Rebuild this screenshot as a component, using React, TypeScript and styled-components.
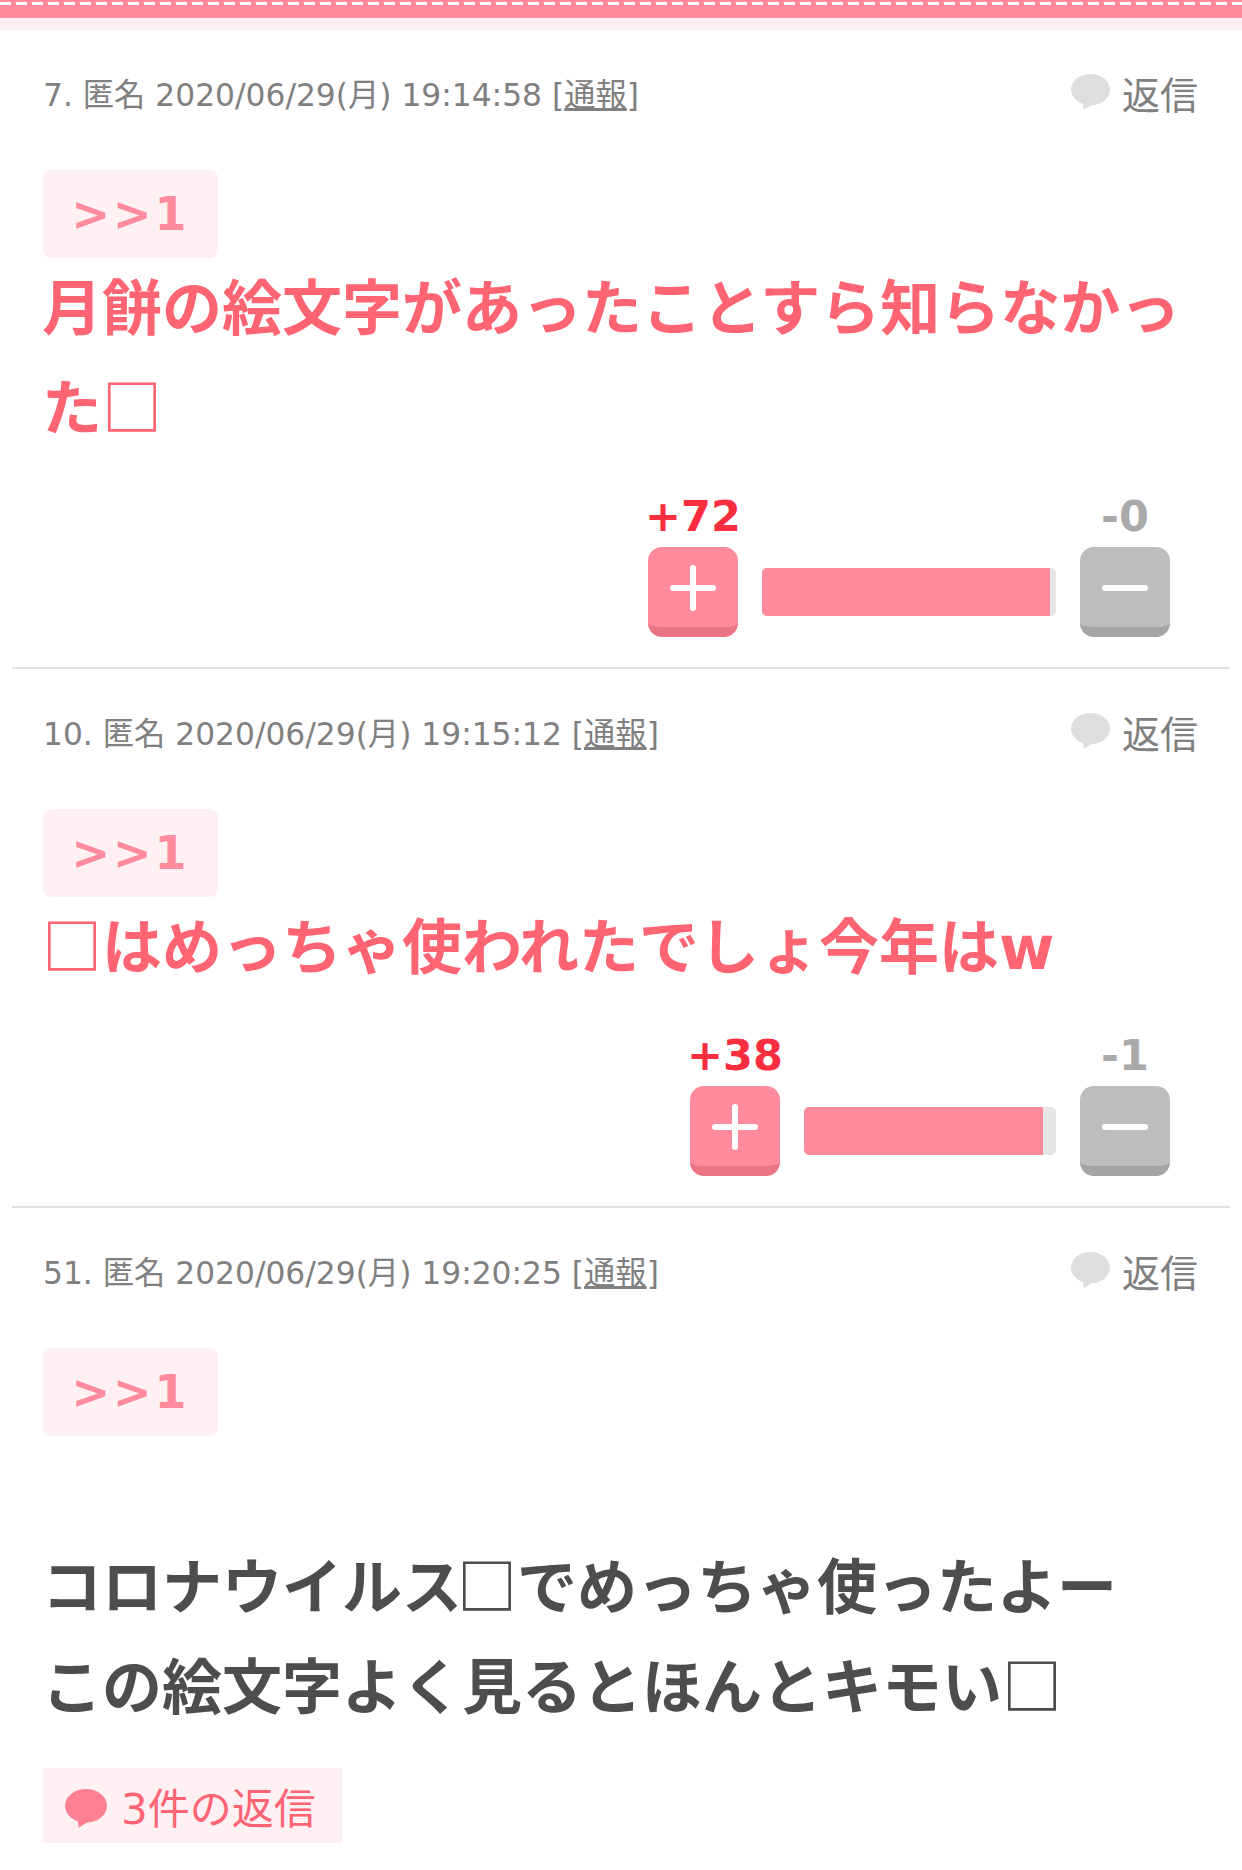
import React from 'react';
import styled, { createGlobalStyle } from 'styled-components';

const GlobalStyle = createGlobalStyle`
  html, body {
    margin: 0;
    padding: 0;
    background: #fff;
    overflow: hidden;
  }
  body {
    font-family: "DejaVu Sans", "Noto Sans CJK JP", sans-serif;
  }
`;

const Page = styled.div`
  width: 1242px;
  height: 1870px;
  overflow: hidden;
`;

const TopBand = styled.div`
  height: 16px;
  background: #ff8b9c;
  padding-top: 2px;
  border-bottom: 12px solid #fdeef1;
`;

const Stitch = styled.div`
  height: 3px;
  background: repeating-linear-gradient(to right, #fff 0 11px, transparent 11px 16px);
`;

const Post = styled.article<{ $last?: boolean }>`
  margin: 0 12px;
  padding: 0 31px;
  border-bottom: ${(p) => (p.$last ? 'none' : '2px solid #e2e2e2')};
  padding-bottom: ${(p) => (p.$last ? '0' : '30px')};
`;

const MetaRow = styled.div`
  display: flex;
  align-items: center;
  justify-content: space-between;
  height: 60px;
  padding-top: 32px;
  margin-bottom: 48px;
  margin-right: 1px;
`;

const Meta = styled.div`
  font-size: 31.3px;
  color: #808080;
  white-space: nowrap;

  a {
    color: #808080;
    text-decoration: underline;
  }
`;

const ReplyButton = styled.div`
  display: flex;
  align-items: center;
  gap: 12px;
  font-size: 38px;
  color: #808080;
`;

const Tag = styled.div`
  display: flex;
  align-items: center;
  justify-content: center;
  width: 175px;
  height: 88px;
  border-radius: 8px;
  background: #fff0f3;
  color: #ff8b9c;
  font-size: 46px;
  font-weight: 700;
  letter-spacing: 3px;
`;

const Body = styled.div<{ $reply?: boolean }>`
  font-size: 60px;
  line-height: 100px;
  font-weight: 700;
  color: ${(p) => (p.$reply ? '#ff6473' : '#4d4d4d')};
  margin-top: 1px;
  margin-left: -1px;
`;

const Tofu = styled.span<{ $tight?: boolean }>`
  font-family: "Noto Sans CJK JP", sans-serif;
  font-weight: 700;
  line-height: 1;
  margin-left: ${(p) => (p.$tight ? '-5px' : '0')};
`;

const VoteRow = styled.div`
  display: flex;
  justify-content: flex-end;
  align-items: flex-end;
  gap: 24px;
  margin-top: 32px;
  padding-right: 29px;
`;

const VoteColumn = styled.div`
  display: flex;
  flex-direction: column;
  align-items: center;
  width: 90px;
`;

const VoteCount = styled.div<{ $plus?: boolean }>`
  font-size: 43px;
  line-height: 50px;
  height: 56px;
  font-weight: 700;
  white-space: nowrap;
  color: ${(p) => (p.$plus ? '#f92e3f' : '#a9a9a9')};
`;

const VoteButton = styled.div<{ $plus?: boolean }>`
  width: 90px;
  height: 90px;
  box-sizing: border-box;
  border-radius: 14px;
  display: flex;
  align-items: center;
  justify-content: center;
  padding-top: 2px;
  background: ${(p) => (p.$plus ? '#ff8b9c' : '#bdbdbd')};
  border-bottom: 10px solid ${(p) => (p.$plus ? '#ec7585' : '#a5a5a5')};
`;

const Bar = styled.div<{ $width: number }>`
  width: ${(p) => p.$width}px;
  height: 48px;
  margin-bottom: 21px;
  border-radius: 5px;
  background: #e6e6e6;
  overflow: hidden;
`;

const BarFill = styled.div`
  height: 100%;
  background: #ff8b9c;
`;

const ReplyCount = styled.div`
  display: flex;
  align-items: center;
  gap: 14px;
  width: 299px;
  height: 75px;
  box-sizing: border-box;
  padding-left: 22px;
  margin-top: 30px;
  background: #fff0f3;
  color: #ff6473;
  font-size: 42px;
`;

const BlankLine = styled.div`
  height: 101px;
`;

const BubbleIcon = styled.svg<{ $drop: number }>`
  margin-top: ${(p) => p.$drop}px;
`;

const Bubble = ({ color, width, drop }: { color: string; width: number; drop: number }) => (
  <BubbleIcon $drop={drop} width={width} viewBox="0 0 40 38" fill={color}>
    <ellipse cx="20" cy="16" rx="20" ry="16" />
    <path d="M12 27 L13 37 L24 30 Z" />
  </BubbleIcon>
);

const PlusIcon = () => (
  <svg width="46" height="46" viewBox="0 0 46 46" fill="none" stroke="#fff" strokeWidth="6" strokeLinecap="round">
    <path d="M23 3 V43 M3 23 H43" />
  </svg>
);

const MinusIcon = () => (
  <svg width="46" height="8" viewBox="0 0 46 8" fill="none" stroke="#fff" strokeWidth="6" strokeLinecap="round">
    <path d="M3 4 H43" />
  </svg>
);

interface IPostHeaderProps {
  no: number;
  time: string;
}

const PostHeader: React.FC<IPostHeaderProps> = ({ no, time }) => (
  <MetaRow>
    <Meta>
      {no}. 匿名 2020/06/29(月) {time} [<a href="#report">通報</a>]
    </Meta>
    <ReplyButton>
      <Bubble color="#dedede" width={39} drop={2} />
      返信
    </ReplyButton>
  </MetaRow>
);

interface IVotesProps {
  plus: number;
  minus: number;
  barWidth: number;
  ratio: number;
}

const Votes: React.FC<IVotesProps> = ({ plus, minus, barWidth, ratio }) => (
  <VoteRow>
    <VoteColumn>
      <VoteCount $plus>+{plus}</VoteCount>
      <VoteButton $plus>
        <PlusIcon />
      </VoteButton>
    </VoteColumn>
    <Bar $width={barWidth}>
      <BarFill style={{ width: `${ratio}%` }} />
    </Bar>
    <VoteColumn>
      <VoteCount>-{minus}</VoteCount>
      <VoteButton>
        <MinusIcon />
      </VoteButton>
    </VoteColumn>
  </VoteRow>
);

export default function App() {
  return (
    <Page>
      <GlobalStyle />
      <TopBand>
        <Stitch />
      </TopBand>

      <Post>
        <PostHeader no={7} time="19:14:58" />
        <Tag>&gt;&gt;1</Tag>
        <Body $reply>
          月餅の絵文字があったことすら知らなかった<Tofu>□</Tofu>
        </Body>
        <Votes plus={72} minus={0} barWidth={294} ratio={98} />
      </Post>

      <Post>
        <PostHeader no={10} time="19:15:12" />
        <Tag>&gt;&gt;1</Tag>
        <Body $reply>
          <Tofu>□</Tofu>はめっちゃ使われたでしょ今年はw
        </Body>
        <Votes plus={38} minus={1} barWidth={252} ratio={95} />
      </Post>

      <Post $last>
        <PostHeader no={51} time="19:20:25" />
        <Tag>&gt;&gt;1</Tag>
        <BlankLine />
        <Body>
          コロナウイルス<Tofu $tight>□</Tofu>でめっちゃ使ったよー
          <br />
          この絵文字よく見るとほんとキモい<Tofu>□</Tofu>
        </Body>
        <ReplyCount>
          <Bubble color="#ff8092" width={42} drop={6} />
          3件の返信
        </ReplyCount>
      </Post>
    </Page>
  );
}
